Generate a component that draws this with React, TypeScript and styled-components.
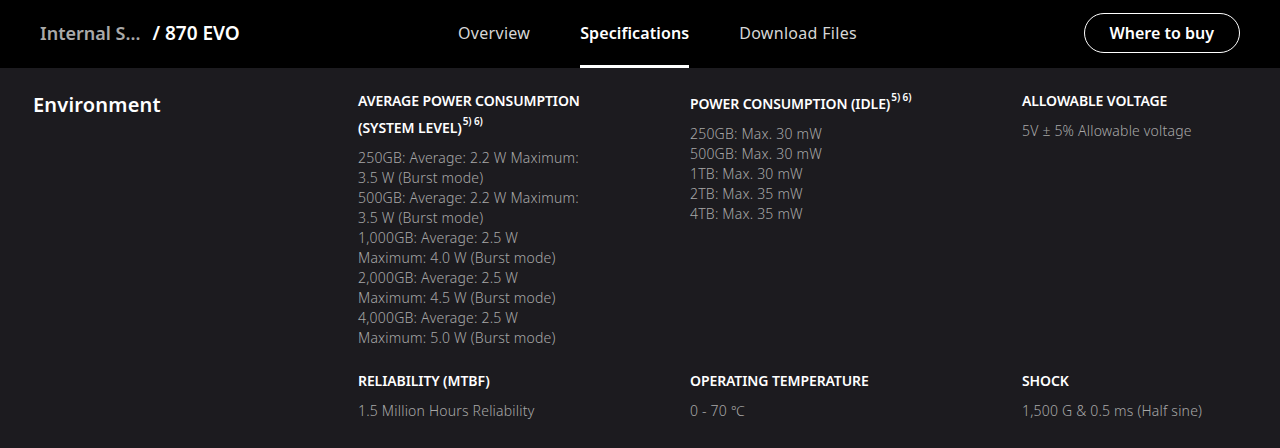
import styled, { createGlobalStyle } from 'styled-components';

const GlobalStyle = createGlobalStyle`
  body {
    margin: 0;
    background: #1c1b1f;
    font-family: 'Noto Sans', 'Open Sans', sans-serif;
    -webkit-font-smoothing: antialiased;
  }
`;

const Page = styled.div`
  width: 1280px;
  height: 448px;
  background: #1c1b1f;
  overflow: hidden;
`;

const Header = styled.header`
  height: 68px;
  background: #000;
  display: flex;
  align-items: center;
  padding: 0 40px 3px;
  box-sizing: border-box;
`;

const Breadcrumb = styled.div`
  display: flex;
  align-items: center;
  gap: 12px;
  font-size: 18px;
  font-weight: 600;
  width: 260px;
`;

const Crumb = styled.span<{ $current?: boolean }>`
  color: ${({ $current }) => ($current ? '#fff' : '#a9a9a9')};
  font-size: ${({ $current }) => ($current ? '19px' : '18px')};
`;

const Nav = styled.nav`
  display: flex;
  align-items: stretch;
  gap: 50px;
  height: 68px;
  margin: 0 0 -3px 158px;
`;

const NavItem = styled.a<{ $active?: boolean }>`
  display: flex;
  align-items: center;
  font-size: 16px;
  color: ${({ $active }) => ($active ? '#fff' : '#d6d6d6')};
  font-weight: ${({ $active }) => ($active ? 600 : 400)};
  letter-spacing: ${({ $active }) => ($active ? '0.1px' : '0.3px')};
  text-decoration: none;
  border-bottom: 3px solid ${({ $active }) => ($active ? '#fff' : 'transparent')};
  box-sizing: border-box;
`;

const BuyButton = styled.button`
  height: 40px;
  padding: 0 25px;
  border: 1.5px solid #fff;
  border-radius: 20px;
  background: transparent;
  color: #fff;
  font-family: inherit;
  font-size: 16px;
  font-weight: 600;
  margin-left: auto;
`;

const Main = styled.main`
  display: grid;
  grid-template-columns: 325px 1fr;
  padding: 21px 0 0 33px;
`;

const SectionTitle = styled.h2`
  margin: 2px 0 0;
  color: #fff;
  font-size: 20px;
  font-weight: 600;
  line-height: 28px;
  letter-spacing: 0.2px;
`;

const SpecGrid = styled.div`
  display: grid;
  grid-template-columns: repeat(3, 224px);
  column-gap: 108px;
  row-gap: 21px;
`;

const Spec = styled.div``;

const SpecTitle = styled.h3`
  margin: 0 0 8px;
  color: #fff;
  font-size: 14px;
  font-weight: 600;
  line-height: 24px;
  letter-spacing: -0.1px;

  sup {
    font-size: 10px;
    line-height: 16px;
    vertical-align: 8px;
    margin-left: 1px;
  }
`;

const SpecValue = styled.p`
  margin: 0;
  color: #a8a8a8;
  font-size: 14px;
  font-weight: 300;
  line-height: 20px;
  letter-spacing: 0.2px;
`;

const specs = [
  {
    title: 'AVERAGE POWER CONSUMPTION (SYSTEM LEVEL)',
    note: '5) 6)',
    lines: [
      '250GB: Average: 2.2 W Maximum: 3.5 W (Burst mode)',
      '500GB: Average: 2.2 W Maximum: 3.5 W (Burst mode)',
      '1,000GB: Average: 2.5 W Maximum: 4.0 W (Burst mode)',
      '2,000GB: Average: 2.5 W Maximum: 4.5 W (Burst mode)',
      '4,000GB: Average: 2.5 W Maximum: 5.0 W (Burst mode)',
    ],
  },
  {
    title: 'POWER CONSUMPTION (IDLE)',
    note: '5) 6)',
    lines: ['250GB: Max. 30 mW', '500GB: Max. 30 mW', '1TB: Max. 30 mW', '2TB: Max. 35 mW', '4TB: Max. 35 mW'],
  },
  { title: 'ALLOWABLE VOLTAGE', lines: ['5V ± 5% Allowable voltage'] },
  { title: 'RELIABILITY (MTBF)', lines: ['1.5 Million Hours Reliability'] },
  { title: 'OPERATING TEMPERATURE', lines: ['0 - 70 ℃'] },
  { title: 'SHOCK', lines: ['1,500 G & 0.5 ms (Half sine)'] },
];

const App = () => (
  <Page>
    <GlobalStyle />
    <Header>
      <Breadcrumb>
        <Crumb>Internal S...</Crumb>
        <Crumb $current>/ 870 EVO</Crumb>
      </Breadcrumb>
      <Nav>
        <NavItem>Overview</NavItem>
        <NavItem $active>Specifications</NavItem>
        <NavItem>Download Files</NavItem>
      </Nav>
      <BuyButton>Where to buy</BuyButton>
    </Header>
    <Main>
      <SectionTitle>Environment</SectionTitle>
      <SpecGrid>
        {specs.map((s) => (
          <Spec key={s.title}>
            <SpecTitle>
              {s.title}
              {s.note && <sup>{s.note}</sup>}
            </SpecTitle>
            {s.lines.map((l) => (
              <SpecValue key={l}>{l}</SpecValue>
            ))}
          </Spec>
        ))}
      </SpecGrid>
    </Main>
  </Page>
);

export default App;
